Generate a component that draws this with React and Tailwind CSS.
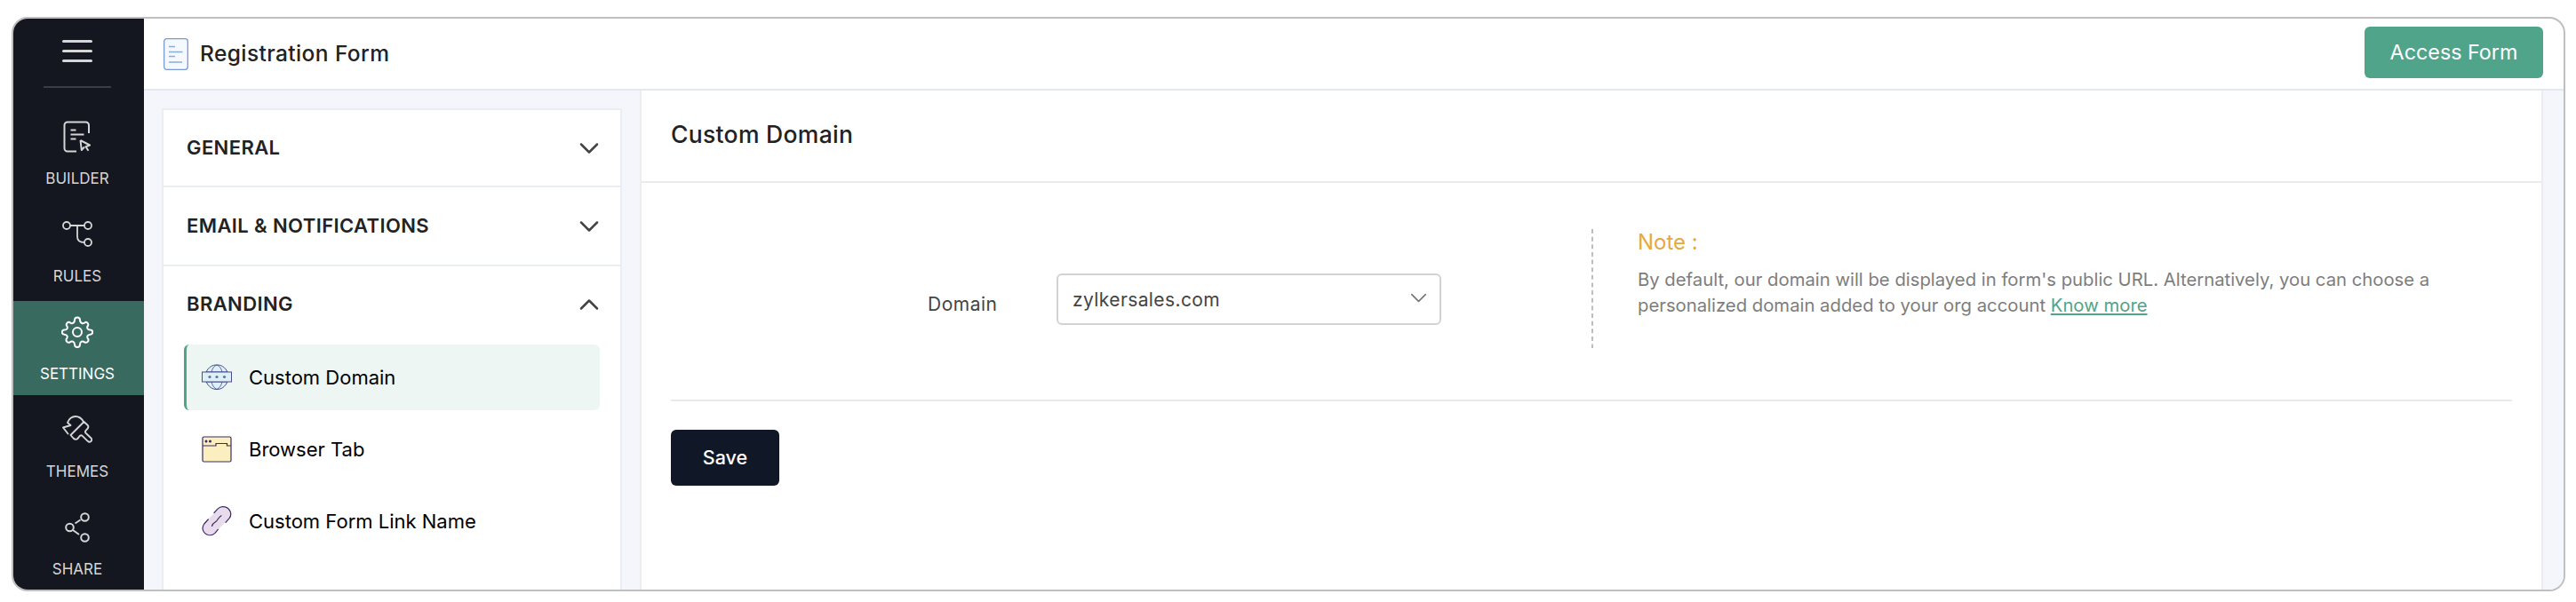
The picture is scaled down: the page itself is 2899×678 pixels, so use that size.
import { ChevronDown, ChevronUp } from 'lucide-react';

const BuilderIcon = () => (
  <svg width="34" height="36" viewBox="0 0 34 36" fill="none" stroke="currentColor" strokeWidth="2" strokeLinejoin="round">
    <path d="M16 34.500H6a3.500 3.500 0 0 1-3.500-3.500V5A3.500 3.500 0 0 1 6 1.500h20.500A3.500 3.500 0 0 1 30 5v9" />
    <path d="M9.500 10.500h6M9.500 15.500h15M9.500 20.500h6" />
    <path d="M20.500 22l10.500 5.500-4.500 1.800 3 4.500M20.500 22l1.300 11 3.200-3.500" />
  </svg>
);

const RulesIcon = () => (
  <svg width="34" height="30" viewBox="0 0 34 30" fill="none" stroke="currentColor" strokeWidth="1.800">
    <circle cx="5" cy="5" r="4" />
    <circle cx="29" cy="5" r="4" />
    <circle cx="29" cy="24" r="4" />
    <path d="M9 5h16M17 5v12.500c0 4 2.500 6.500 8 6.500" />
  </svg>
);

const GearIcon = () => (
  <svg width="36" height="36" viewBox="0 0 36 36" fill="none" stroke="currentColor" strokeWidth="2" strokeLinejoin="round">
    <path d="M15 4.500a3 3 0 0 1 6 0q.2 3 2.500 3.700 2 .4 3.600-1.400a3 3 0 0 1 3.100 3.700q-1.700 2-.6 3.800 1 1.500 3 1.200a2.600 2.600 0 0 1 0 5.200q-2.400.1-3.200 1.800-.7 1.800 1 3.500a3 3 0 0 1-4 3.600q-2-1.600-3.600-.9-1.700.8-1.800 3.300a3 3 0 0 1-6 0q-.2-2.600-1.900-3.300-1.800-.6-3.600.9a3 3 0 0 1-3.900-3.600q1.600-1.900 1-3.500-.8-1.700-3.200-1.800a2.600 2.600 0 0 1 0-5.200q2.200.1 3.100-1.300.9-1.900-.7-3.700a3 3 0 0 1 3.200-3.700q1.600 1.600 3.500 1.300 2.300-.6 2.500-3.600z" />
    <circle cx="18" cy="18" r="5" />
  </svg>
);

const ThemesIcon = () => (
  <svg width="34" height="32" viewBox="0 0 34 32" fill="none" stroke="currentColor" strokeWidth="1.900" strokeLinejoin="round" strokeLinecap="round">
    <path d="M6.500 20.500L1 13.500l8.500-2.500-3.500-3C8 3 11 1 15 1c4.500 0 7 2.500 9 6" />
    <path d="M24.500 7l4 3.700c1.300 1.500 1.200 2.800-.2 4.300-2.300 2.300-3.500 3.500-1 5.500l5 4.700c2.500 2.600-.8 6-3.600 3.600l-5-5c-2-2.200-3.400-2-5 .4-1.700 3.300-4.200 3.300-6.200 1.300L9.500 22z" />
  </svg>
);

const ShareIcon = () => (
  <svg width="28" height="34" viewBox="0 0 28 34" fill="none" stroke="currentColor" strokeWidth="2">
    <circle cx="22.500" cy="5.500" r="4.300" />
    <circle cx="5.500" cy="17" r="4.300" />
    <circle cx="22.500" cy="28.500" r="4.300" />
    <path d="M11.500 12.500l6-4M9 20l7 5" />
  </svg>
);

const FormIcon = () => (
  <svg width="28" height="36" viewBox="0 0 28 36" fill="none">
    <rect x="0.700" y="0.700" width="26.600" height="34.600" rx="3" fill="#f5f9fe" stroke="#7799d6" strokeWidth="1.300" />
    <path d="M6 9.500h7M6 15.500h15.500M6 20.500h7M6 27h15" stroke="#8aade0" strokeWidth="1.300" />
  </svg>
);

const GlobeIcon = () => (
  <svg width="34" height="30" viewBox="0 0 34 30" fill="none" stroke="#4b4a8c" strokeWidth="1">
    <path d="M5 9C8 3 12 1 17 1s9 2 12 8zM5 20c3 6 7 8.500 12 8.500s9-2.500 12-8.500z" fill="#dcf0f8" />
    <path d="M11 9c.8-4 3-7 6-8 3 1 5.200 4 6 8M11 20c.8 4 3 7 6 8.500 3-1.500 5.200-4.500 6-8.500" strokeWidth=".8" />
    <rect x="0.500" y="9" width="33" height="11" fill="#dcf0f8" />
    <g fill="#6a6ba6" stroke="none">
      <circle cx="9" cy="14.500" r="1.600" />
      <circle cx="17" cy="14.500" r="1.600" />
      <circle cx="25.500" cy="14.500" r="1.600" />
    </g>
  </svg>
);

const BrowserIcon = () => (
  <svg width="34" height="30" viewBox="0 0 34 30" fill="none" stroke="#3a2a68" strokeWidth="1.200">
    <rect x="1" y="1" width="32" height="28" rx="1.500" fill="#fbefbf" />
    <path d="M1 11h15V8.500h12.500V11H33" />
    <circle cx="5" cy="6" r=".9" fill="#3a2a68" />
    <circle cx="9.500" cy="6" r=".9" fill="#3a2a68" />
  </svg>
);

const LinkIcon = () => (
  <svg width="34" height="34" viewBox="0 0 34 34" fill="none" strokeLinecap="round">
    <path d="M9 24.500L24.500 9" stroke="#e8dbec" strokeWidth="16" />
    <path
      d="M14 7.500l4-4.300c2.200-2.300 5-3 8-2.300 6 1.500 8.500 8 5.300 12.500L27 18.300M7.300 15l-4.500 5c-3.500 4.500-1.300 11 4.500 12.500 3 .7 5.700-.2 7.700-2.200l3.300-4M11.500 22.500c.6-2.200 2-3.500 4-4.700 2.300-1.300 3-5 6.500-7"
      stroke="#3a2a68"
      strokeWidth="1.200"
    />
  </svg>
);

const navItems = [
  { id: 'builder', label: 'BUILDER', icon: <BuilderIcon /> },
  { id: 'rules', label: 'RULES', icon: <RulesIcon /> },
  { id: 'settings', label: 'SETTINGS', icon: <GearIcon />, active: true },
  { id: 'themes', label: 'THEMES', icon: <ThemesIcon /> },
  { id: 'share', label: 'SHARE', icon: <ShareIcon /> },
];

const brandingItems = [
  { id: 'domain', label: 'Custom Domain', icon: <GlobeIcon />, active: true },
  { id: 'tab', label: 'Browser Tab', icon: <BrowserIcon /> },
  { id: 'link', label: 'Custom Form Link Name', icon: <LinkIcon /> },
];

const Sidebar = () => (
  <nav className="flex w-[147px] shrink-0 flex-col bg-[#141720] text-[#d5d5d6]">
    <div className="flex shrink-0 flex-col items-center pr-[3px]">
      <button className="mt-6 flex flex-col gap-2" aria-label="Menu">
        <span className="h-[3px] w-[34px] rounded-full bg-[#d5d5d6]" />
        <span className="h-[3px] w-[34px] rounded-full bg-[#d5d5d6]" />
        <span className="h-[3px] w-[34px] rounded-full bg-[#d5d5d6]" />
      </button>
      <div className="mt-[27px] mb-[20px] h-[2px] w-[76px] bg-[#3a3d45]" />
    </div>
    {navItems.map((item) => (
      <div key={item.id} className="h-[110px] w-full shrink-0">
        <div className={`flex h-[106px] flex-col items-center pt-[17px] pr-[3px] ${item.active ? 'bg-[#386a60] text-white' : ''}`}>
          <div className="flex h-[36px] items-center">{item.icon}</div>
          <span className="mt-[18px] text-[17px] leading-[22px]">{item.label}</span>
        </div>
      </div>
    ))}
  </nav>
);

const SectionHeader = ({ label, open }) => {
  const Chevron = open ? ChevronUp : ChevronDown;
  return (
    <div className="flex h-full items-center justify-between pr-[17px] pl-[26px]">
      <span className="text-[22px] font-semibold tracking-[0.4px]">{label}</span>
      <Chevron className="h-9 w-9 text-[#444]" strokeWidth={1.7} />
    </div>
  );
};

const SettingsMenu = () => (
  <aside className="mt-5 ml-5 w-[518px] shrink-0 border-2 border-b-0 border-[#e9eef5] bg-white">
    <div className="h-[87px] border-b-2 border-[#e9eef5]">
      <SectionHeader label="GENERAL" />
    </div>
    <div className="h-[89px] border-b-2 border-[#e9eef5]">
      <SectionHeader label="EMAIL & NOTIFICATIONS" />
    </div>
    <div className="mb-[3px] h-[85px]">
      <SectionHeader label="BRANDING" open />
    </div>
    <ul className="ml-[23px] w-[468px]">
      {brandingItems.map((item) => (
        <li
          key={item.id}
          className={`mb-[7px] flex h-[74px] items-center rounded-md border-l-[3px] pl-[17px] ${
            item.active ? 'border-[#50a48a] bg-[#edf6f3]' : 'border-transparent'
          }`}
        >
          {item.icon}
          <span className="ml-[19px] text-[22px] text-black">{item.label}</span>
        </li>
      ))}
    </ul>
  </aside>
);

const CustomDomain = () => (
  <main className="mr-[23px] ml-5 flex-1 border-x-2 border-[#ebedf1] bg-white">
    <h1 className="flex h-[104px] items-center border-b-2 border-[#ebebec] pb-[2px] pl-[33px] text-[26.500px] font-medium tracking-[0.3px]">
      Custom Domain
    </h1>
    <div className="mx-[33px] flex h-[246px] border-b-2 border-[#e9e9e9] text-[#444]">
      <label className="mt-[123px] ml-[289px] w-[145px] text-[21px] leading-[28px] tracking-[0.5px]">Domain</label>
      <div className="mt-[102px] flex h-[58px] w-[433px] items-center justify-between rounded-md border-2 border-[#d2d2d2] pr-[8px] pl-[16px]">
        <span className="mt-px text-[21px] tracking-[0.4px]">zylkersales.com</span>
        <ChevronDown className="mb-[3px] h-[31px] w-[31px] text-[#777]" strokeWidth={1.3} />
      </div>
      <svg className="mt-[52px] ml-[169px]" width="2" height="134">
        <line x1="1" y1="0" x2="1" y2="134" stroke="#bdbdbd" strokeWidth="2" strokeDasharray="5 3.640" />
      </svg>
      <div className="mt-[52px] ml-[50px] w-[930px]">
        <p className="text-[24px] leading-[30px] text-[#e5a93d]">Note :</p>
        <p className="mt-[12px] text-[20.300px] leading-[29.300px] text-[#7d7d7d]">
          By default, our domain will be displayed in form's public URL. Alternatively, you can choose a
          <br />
          personalized domain added to your org account{' '}
          <a className="text-[#50a48a] underline">Know more</a>
        </p>
      </div>
    </div>
    <button className="mt-[32px] ml-[33px] h-[63px] w-[122px] rounded-md bg-[#101828] text-[21.500px] font-medium text-white">
      Save
    </button>
  </main>
);

export default function App() {
  return (
    <div className="h-[678px] w-[2899px] overflow-hidden bg-white pt-[19px] pl-[13px] font-['Inter',sans-serif] text-[#222]">
      <div className="flex h-[647px] w-[2874px] overflow-hidden rounded-[18px] border-2 border-[#bfbfbf]">
        <Sidebar />
        <div className="flex min-w-0 flex-1 flex-col">
          <header className="flex h-[81px] shrink-0 items-center border-b-2 border-[#e3e7ee] pr-[23px] pl-[22px]">
            <FormIcon />
            <span className="ml-[13px] text-[24.500px] font-medium tracking-[0.4px]">Registration Form</span>
            <button className="mb-[3px] ml-auto h-[58px] w-[201px] rounded-md bg-[#50a48a] text-[23.300px] text-white">
              Access Form
            </button>
          </header>
          <div className="flex min-h-0 flex-1 bg-[#f5f6fb]">
            <SettingsMenu />
            <CustomDomain />
          </div>
        </div>
      </div>
    </div>
  );
}
